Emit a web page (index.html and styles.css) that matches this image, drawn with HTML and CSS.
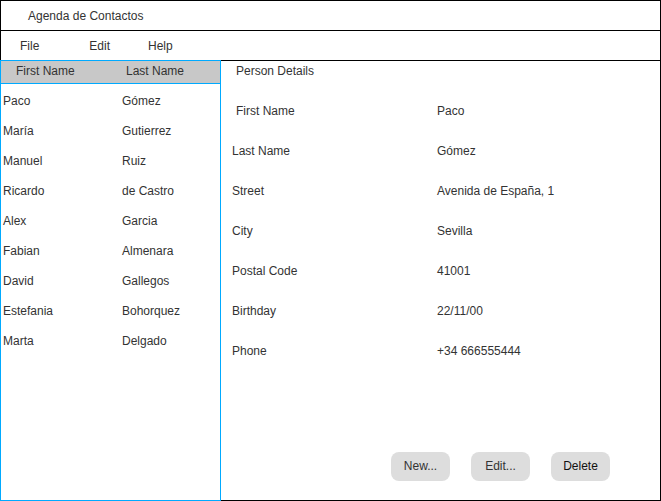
FILE: index.html
```html
<!DOCTYPE html>
<html>
<head>
<meta charset="utf-8">
<link rel="stylesheet" href="styles.css">
</head>
<body>
<div class="window">
  <div class="titlebar">Agenda de Contactos</div>
  <div class="menubar">
    <span class="menu menu-file">File</span>
    <span class="menu menu-edit">Edit</span>
    <span class="menu menu-help">Help</span>
  </div>
  <div class="main">
    <div class="list">
      <div class="list-head">
        <span class="col-first">First Name</span>
        <span class="col-last">Last Name</span>
      </div>
      <div class="list-body">
        <div class="row"><span class="c1">Paco</span><span class="c2">Gómez</span></div>
        <div class="row"><span class="c1">María</span><span class="c2">Gutierrez</span></div>
        <div class="row"><span class="c1">Manuel</span><span class="c2">Ruiz</span></div>
        <div class="row"><span class="c1">Ricardo</span><span class="c2">de Castro</span></div>
        <div class="row"><span class="c1">Alex</span><span class="c2">Garcia</span></div>
        <div class="row"><span class="c1">Fabian</span><span class="c2">Almenara</span></div>
        <div class="row"><span class="c1">David</span><span class="c2">Gallegos</span></div>
        <div class="row"><span class="c1">Estefania</span><span class="c2">Bohorquez</span></div>
        <div class="row"><span class="c1">Marta</span><span class="c2">Delgado</span></div>
      </div>
    </div>
    <div class="details">
      <div class="details-title">Person Details</div>
      <div class="fields">
        <div class="field"><span class="label first">First Name</span><span class="value">Paco</span></div>
        <div class="field"><span class="label">Last Name</span><span class="value">Gómez</span></div>
        <div class="field"><span class="label">Street</span><span class="value">Avenida de España, 1</span></div>
        <div class="field"><span class="label">City</span><span class="value">Sevilla</span></div>
        <div class="field"><span class="label">Postal Code</span><span class="value">41001</span></div>
        <div class="field"><span class="label">Birthday</span><span class="value">22/11/00</span></div>
        <div class="field"><span class="label">Phone</span><span class="value">+34 666555444</span></div>
      </div>
      <div class="buttons">
        <div class="btn">New...</div>
        <div class="btn">Edit...</div>
        <div class="btn btn-dark">Delete</div>
      </div>
    </div>
  </div>
</div>
</body>
</html>
```
FILE: styles.css
```css
* { box-sizing: border-box; }
html, body { margin: 0; padding: 0; background: #fff; }
body {
  font-family: "Liberation Sans", Arial, sans-serif;
  font-size: 12px;
  color: #333;
}
.window {
  width: 661px;
  height: 501px;
  border: 1px solid #000;
  display: flex;
  flex-direction: column;
}
.titlebar {
  height: 30px;
  border-bottom: 1px solid #000;
  padding-left: 27px;
  line-height: 31px;
  flex: none;
}
.menubar {
  height: 30px;
  border-bottom: 1px solid #000;
  display: flex;
  line-height: 31px;
  flex: none;
}
.menu-file { margin-left: 19px; }
.menu-edit { margin-left: 50px; }
.menu-help { margin-left: 38px; }
.main {
  flex: 1;
  display: flex;
  min-height: 0;
}
.list {
  width: 221px;
  margin: -1px 0 -1px -1px;
  border: 1px solid #00aaff;
  flex: none;
  display: flex;
  flex-direction: column;
}
.list-head {
  height: 23px;
  background: #c8c8c8;
  border-bottom: 1px solid #00aaff;
  display: flex;
  line-height: 20px;
}
.col-first { margin-left: 15px; width: 110px; }
.list-body { padding-top: 2px; }
.row {
  height: 30px;
  line-height: 30px;
  display: flex;
}
.c1 { margin-left: 2px; width: 119px; }
.details {
  flex: 1;
  display: flex;
  flex-direction: column;
  padding: 0 50px 19px 0;
}
.details-title {
  height: 20px;
  line-height: 21px;
  padding-left: 15px;
}
.fields { padding-top: 11px; }
.field {
  height: 40px;
  line-height: 38px;
  display: flex;
}
.label { width: 216px; padding-left: 11px; }
.label.first { padding-left: 15px; }
.buttons {
  margin-top: auto;
  display: flex;
  justify-content: flex-end;
  gap: 21px;
}
.btn {
  width: 59px;
  height: 29px;
  line-height: 29px;
  text-align: center;
  background: #dddddd;
  border-radius: 8px;
}
.btn-dark { color: #111; }
```
